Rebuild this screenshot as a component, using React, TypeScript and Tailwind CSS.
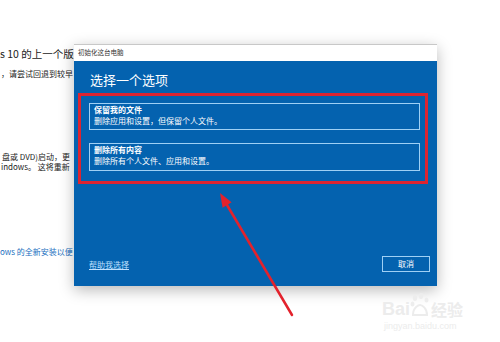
import React from "react";

export default function App() {
  return (
    <div
      className="relative w-[500px] h-[342px] bg-white overflow-hidden"
      style={{ fontFamily: '"Noto Sans CJK SC", "Noto Sans", sans-serif' }}
    >
      {/* background page text */}
      <div className="flex flex-col text-[#222] w-[74px] overflow-hidden">
        <div className="mt-[47px] h-[14px] leading-[14px] text-[10.5px] whitespace-nowrap">s 10 的上一个版</div>
        <div className="mt-[8px] h-[10px] leading-[10px] text-[8px] whitespace-nowrap ml-[1px]">，请尝试回退到较早</div>
        <div className="mt-[73px] h-[10px] leading-[10px] text-[8px] whitespace-nowrap ml-[2px]">盘或 DVD)启动，更</div>
        <div className="h-[10px] leading-[10px] text-[8px] whitespace-nowrap ml-[1px]">indows。 这将重新</div>
        <div className="mt-[75px] h-[10px] leading-[10px] text-[8px] whitespace-nowrap text-[#1a6fc0]">ows 的全新安装以便</div>
      </div>

      {/* dialog window */}
      <div className="absolute left-[74px] top-[44px] w-[363px] flex flex-col shadow-[0_4px_14px_rgba(0,0,0,0.28)]">
        <div className="h-[17px] bg-white border-t border-[#c8c8c8] flex items-center px-[4px] text-[6.5px] text-[#333]">
          初始化这台电脑
        </div>
        <div className="h-[225px] bg-[#0462af] flex flex-col text-white">
          <div className="mt-[11px] ml-[16px] h-[16px] leading-[16px] text-[13px]">选择一个选项</div>
          <div className="mt-[5px] ml-[4px] w-[350px] h-[91px] border-[3px] border-[#dc2431] flex flex-col gap-[13px] pt-[7px] pl-[8px]">
            <div className="w-[331px] h-[27px] border-[1.5px] border-[#9fd0f5] px-[4px] pt-[1px] flex flex-col">
              <div className="h-[10px] leading-[10px] text-[8px] font-bold">保留我的文件</div>
              <div className="h-[10px] leading-[10px] text-[8px] mt-[1px]">删除应用和设置，但保留个人文件。</div>
            </div>
            <div className="w-[331px] h-[28px] border-[1.5px] border-[#9fd0f5] px-[4px] pt-[1px] flex flex-col">
              <div className="h-[10px] leading-[10px] text-[8px] font-bold">删除所有内容</div>
              <div className="h-[10px] leading-[10px] text-[8px] mt-[1px]">删除所有个人文件、应用和设置。</div>
            </div>
          </div>
          <div className="mt-auto flex items-center justify-between pl-[15px] pr-[7px] pb-[14px]">
            <span className="text-[8px] leading-[10px] text-[#bfe0ff] underline mt-[2px]">帮助我选择</span>
            <div className="w-[48px] h-[16px] border-[1.5px] border-[#9fd0f5] flex items-center justify-center text-[8px]">
              取消
            </div>
          </div>
        </div>
      </div>

      {/* red annotation arrow */}
      <svg className="absolute left-0 top-0" width="500" height="342" viewBox="0 0 500 342">
        <line x1="292" y1="315" x2="227" y2="205" stroke="#e3222c" strokeWidth="2.5" strokeLinecap="round" />
        <polygon points="220,193 231.6,202.3 222.6,207.8" fill="#e3222c" />
      </svg>

      {/* baidu watermark */}
      <div className="absolute left-[382px] top-[288px] flex flex-col items-start text-[#ececec]">
        <div className="relative flex items-end h-[30px]">
          <span className="text-[18px] leading-[18px] font-bold" style={{ fontFamily: '"Liberation Sans", sans-serif' }}>Bai</span>
          <svg width="20" height="26" viewBox="0 0 20 26" className="mb-[-1px]">
            <ellipse cx="5" cy="5" rx="2.2" ry="3" fill="#ededed" />
            <ellipse cx="11" cy="3" rx="2.2" ry="3" fill="#ededed" />
            <ellipse cx="16.5" cy="7" rx="2" ry="2.6" fill="#ededed" />
            <ellipse cx="2.5" cy="11" rx="2" ry="2.6" fill="#ededed" />
            <path d="M3 22 C3 14 9 12 10 12 C12 12 17 15 17 22 Z" fill="none" stroke="#ececec" strokeWidth="2" />
          </svg>
          <span className="text-[16px] leading-[18px] font-bold ml-[1px]">经验</span>
        </div>
        <div className="text-[9px] leading-[12px] mt-[2px] ml-[2px]" style={{ fontFamily: '"Liberation Sans", sans-serif' }}>jingyan.baidu.com</div>
      </div>
    </div>
  );
}
